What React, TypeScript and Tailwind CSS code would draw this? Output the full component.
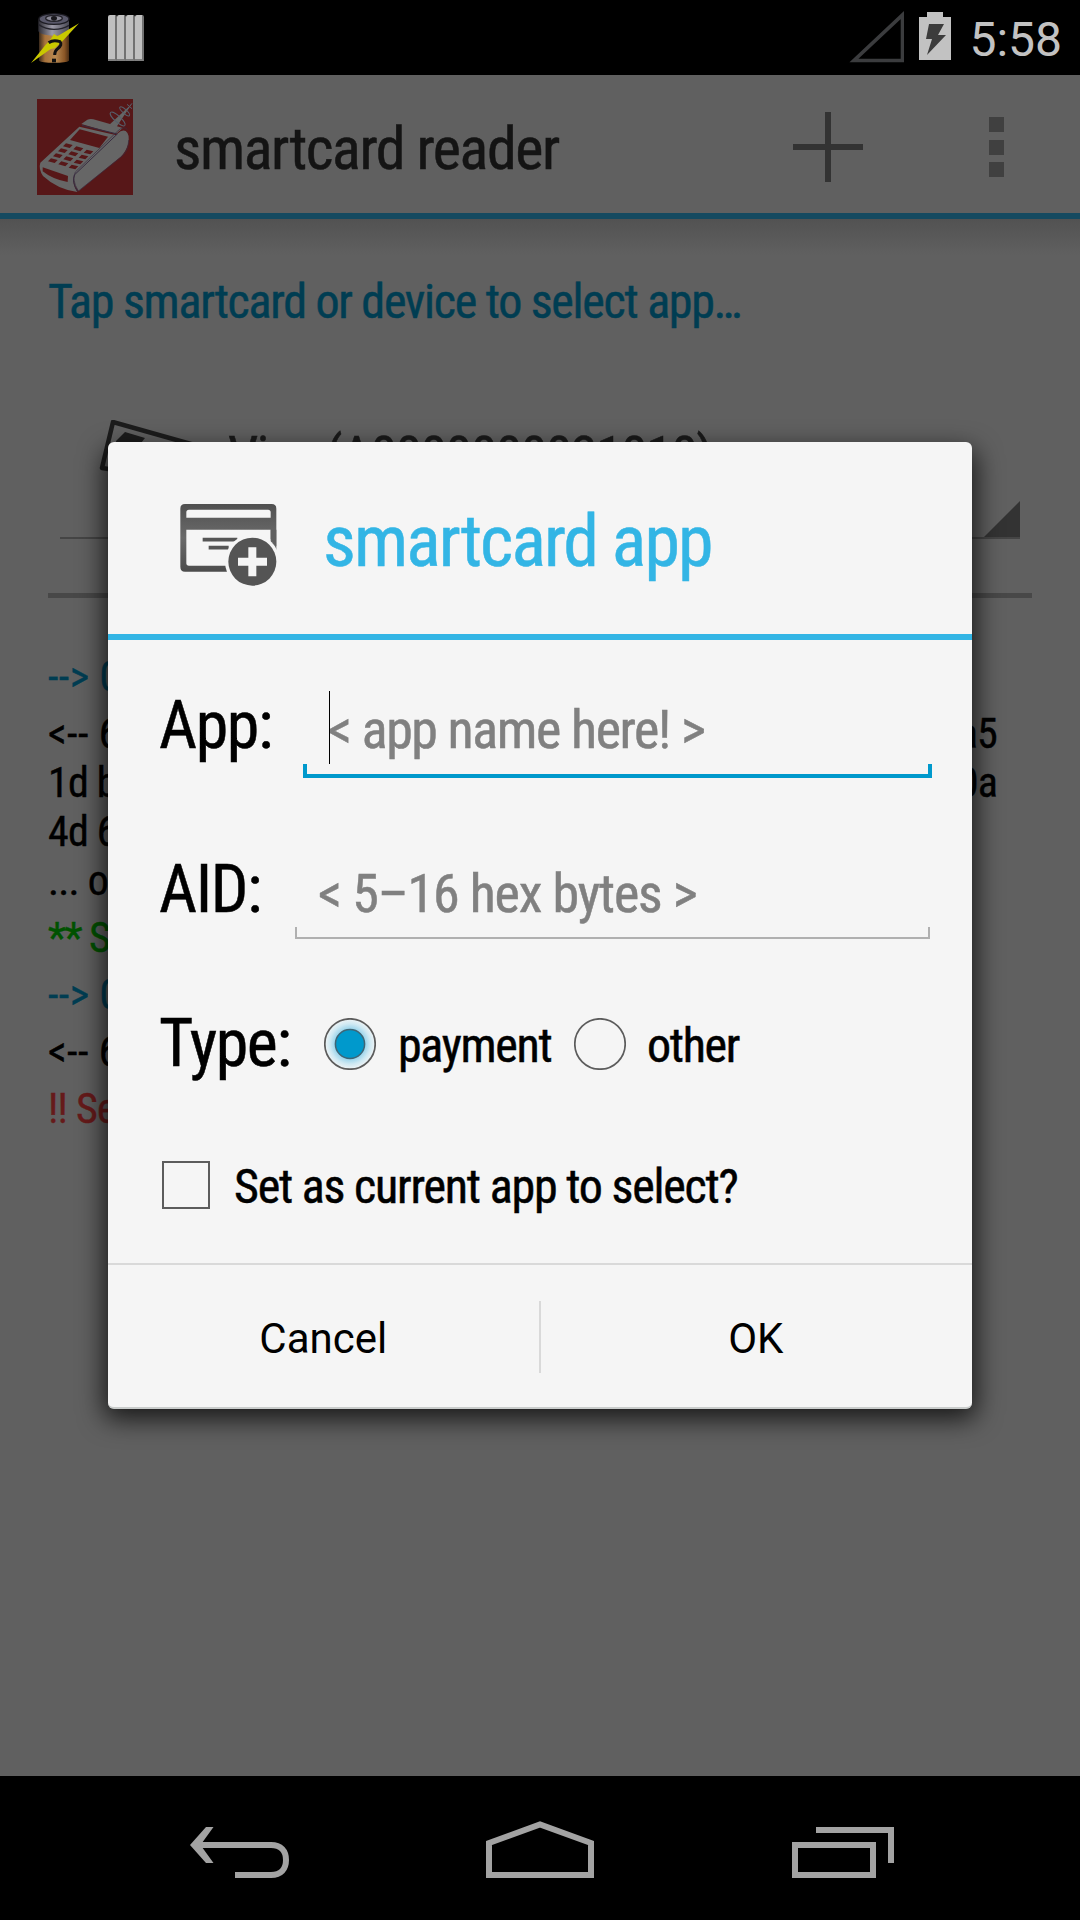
import type { ReactNode } from "react";

function UnknownBatteryIcon() {
  return (
    <svg className="h-[52px] w-12" viewBox="93 36 144 156">
      <defs>
        <linearGradient id="can" x1="0" x2="1">
          <stop offset="0" stopColor="#3a2a1c" />
          <stop offset="0.2" stopColor="#a8733c" />
          <stop offset="0.55" stopColor="#b98a52" />
          <stop offset="0.85" stopColor="#8a5626" />
          <stop offset="1" stopColor="#4a2d14" />
        </linearGradient>
        <linearGradient id="lid" x1="0" x2="1">
          <stop offset="0" stopColor="#2d2c33" />
          <stop offset="0.45" stopColor="#9c9aa8" />
          <stop offset="1" stopColor="#4a4955" />
        </linearGradient>
      </defs>
      <path d="M117 92h90v90q-8 6-45 6t-45-6z" fill="url(#can)" />
      <path d="M115 56h92v38q-10 13-46 13t-46-13z" fill="url(#lid)" />
      <ellipse cx="162" cy="57" rx="45" ry="16" fill="#59586a" stroke="#1c1b22" strokeWidth="4" />
      <ellipse cx="162" cy="55" rx="25" ry="9" fill="#8a8996" stroke="#24232a" strokeWidth="4" />
      <ellipse cx="162" cy="55" rx="9" ry="7" fill="#19181d" />
      <path d="M116 74q20 14 46 14t45-12" fill="none" stroke="#24232b" strokeWidth="4" />
      <path d="M237 70l-52 56-20 18-14 4-58 41 44-55 13-13 12-19 10 7z" fill="#c9c800" />
      <path d="M146 128q14-10 34-3 8 10-7 21-9 7-9 19" fill="none" stroke="#111" strokeWidth="9" />
      <path d="M156 176h12v11h-12z" fill="#111" />
    </svg>
  );
}

function BarsIcon() {
  return (
    <div className="flex h-[46px] w-9">
      {[0, 1, 2, 3].map((bar) => (
        <div
          key={bar}
          className="h-full w-[9px] rounded-t-[2px] border-r-2 border-b-2 border-r-[#727272] border-b-[#808080] bg-[#c0c0c0]"
        />
      ))}
    </div>
  );
}

function TerminalLogo() {
  return (
    <svg className="h-24 w-24 shrink-0" viewBox="111 297 288 288">
      <rect x="111" y="297" width="288" height="288" fill="#571718" />
      <g fill="#666">
        <path d="M121 488L238 380l112 26L222 530q-6 22 10 46-60-8-103-48-14-22-8-40z" />
        <path d="M244 372l18-13q8-3 18-1l50 14 38 12-20 18z" />
        <path d="M328 374L395 312l-46 70z" />
        <path d="M222 540q-2-10 8-20L352 401q14-13 25-8 14 10 7 40-7 24-22 37L236 573q-14-16-14-33z" />
      </g>
      <path d="M246 376l106 26L224 524q-10 20 8 50" fill="none" stroke="#382c40" strokeWidth="3" />
      <path d="M382 388q-12-12-30 6L226 516q-12 22 9 57L362 472q24-18 24-52" fill="none" stroke="#382c40" strokeWidth="2" />
      <g fill="none" stroke="#56606c" strokeWidth="3">
        <ellipse cx="353" cy="357" rx="29" ry="9" transform="rotate(42 353 357)" />
        <ellipse cx="374" cy="334" rx="19" ry="6" transform="rotate(42 374 334)" />
        <path d="M381 313l15 13M396 310l-14 18" />
      </g>
      <g fill="#571718">
        <path d="M239 388l85 22-26 34-88-24z" />
        <path d="M128 502l76 26-1 18q-44-7-75-32z" />
        {[0, 1, 2, 3].map((row) => (
          <g key={row} transform={`translate(${row * -15} ${row * 15})`}>
            <path d="M198 430l20 5-9 9-20-5z" />
            <path d="M229 439l21 6-9 9-21-6z" />
            <path d="M260 449l20 5-9 9-20-5z" />
          </g>
        ))}
      </g>
    </svg>
  );
}

function StatusBar() {
  return (
    <div className="flex h-[75px] shrink-0 bg-black">
      <div className="flex gap-[29px] pt-3 pl-[31px]">
        <UnknownBatteryIcon />
        <div className="pt-[3px]">
          <BarsIcon />
        </div>
      </div>
      <div className="ml-auto flex pr-[18px]">
        <svg className="mt-[11px] mr-[15px] h-[52px] w-[55px]" viewBox="0 0 55 52">
          <path d="M5 49.5H53.5V4z" fill="none" stroke="#3b3c3e" strokeWidth="3.6" />
        </svg>
        <svg className="mt-3 mr-[18px] h-12 w-8" viewBox="0 0 32 48">
          <path d="M8 0h16v5h8v43H0V5h8z" fill="#c2c2c2" />
          <path d="M10 12h15l-6 11h8L8 43l5-16H7z" fill="#3c3c3c" />
        </svg>
        <div className="text-[48px] leading-[80px] text-[#c2c2c2]">5:58</div>
      </div>
    </div>
  );
}

function ActionBar() {
  return (
    <div className="flex h-36 shrink-0 border-b-6 border-[#154a60] bg-[#606060] pl-[37px]">
      <div className="pt-6">
        <TerminalLogo />
      </div>
      <div className="pt-[38px] pl-[41px] font-['Roboto_Condensed'] text-[60px] leading-[72px] tracking-[-1.4px] text-[#141414] [-webkit-text-stroke:0.5px]">
        smartcard reader
      </div>
      <svg className="mt-9 mr-[126px] ml-auto h-[72px] w-[70px]" viewBox="0 0 70 72">
        <path d="M35 1v70M0 36h70" stroke="#333" strokeWidth="6" />
      </svg>
      <div className="mt-[42px] mr-[76px] flex flex-col gap-[7.5px]">
        <div className="size-[15px] bg-[#404040]" />
        <div className="size-[15px] bg-[#404040]" />
        <div className="size-[15px] bg-[#404040]" />
      </div>
    </div>
  );
}

function Spinner() {
  return (
    <div className="mx-[60px] mt-[88px] flex h-[119px] border-b-2 border-[#454545]">
      <svg className="ml-[38px] h-[60px] w-[120px]" viewBox="98 420 120 60">
        <path d="M102 468L113 422L198 446L240 458V490z" fill="none" stroke="#1c1c1c" strokeWidth="4.5" strokeLinejoin="round" />
        <path d="M116 441l9-9 20 6-8 10h-20z" fill="#1c1c1c" />
      </svg>
      <div className="ml-[10px] pt-[6px] font-['Roboto_Condensed'] text-[54px] leading-[60px] tracking-[-1.6px] text-[#1a1a1a] [-webkit-text-stroke:0.5px]">
        Visa (A0000000031010)
      </div>
      <svg className="mt-auto ml-auto size-9" viewBox="0 0 36 36">
        <path d="M36 0v36H0z" fill="#333" />
      </svg>
    </div>
  );
}

function LogLine({ arrow, left, right }: { arrow?: string; left: string; right?: string }) {
  return (
    <div className="flex h-[49px] justify-between">
      <span className="whitespace-pre">
        {arrow && <span className="tracking-[0.4px]">{arrow} </span>}
        {left}
      </span>
      <span>{right}</span>
    </div>
  );
}

function Log() {
  return (
    <div className="mt-[54px] mr-[83px] ml-12 flex flex-col gap-2 font-['Roboto_Condensed'] text-[42px] leading-[49px] tracking-[-0.8px] text-black [-webkit-text-stroke:0.4px]">
      <div className="text-[#003d52]">
        <LogLine arrow="-->" left="00" />
      </div>
      <div>
        <LogLine arrow="<--" left="6f" right="a5" />
        <LogLine left="1d bf" right="0a" />
        <LogLine left="4d 61" />
        <LogLine left="... ok" />
      </div>
      <div className="tracking-[-1.6px] text-[#005200]">
        <LogLine left="** Se" />
      </div>
      <div className="text-[#003d52]">
        <LogLine arrow="-->" left="00" />
      </div>
      <div>
        <LogLine arrow="<--" left="6f" />
      </div>
      <div className="text-[#661a1a]">
        <LogLine left="!! Sel" />
      </div>
    </div>
  );
}

function DialogIcon() {
  return (
    <svg className="h-[84px] w-[98px]" viewBox="419 279 294 252">
      <defs>
        <linearGradient id="card" x1="0" y1="0" x2="0" y2="1">
          <stop offset="0" stopColor="#505050" />
          <stop offset="0.5" stopColor="#6a6a6a" />
          <stop offset="1" stopColor="#4c4c4c" />
        </linearGradient>
      </defs>
      <path
        fillRule="evenodd"
        fill="url(#card)"
        d="M434 282H694Q708 282 708 296V470Q708 485 694 485H434Q420 485 420 470V296Q420 282 434 282zM446 299Q438 299 438 307V323H691V307Q691 299 683 299zM438 359V460Q438 467 446 467H691V359z"
      />
      <path d="M487 389h104M505 413h60" stroke="#555" strokeWidth="11" />
      <circle cx="636" cy="455" r="82" fill="#f5f5f5" />
      <path d="M691 359h17v50l-17-22z" fill="#606060" />
      <circle cx="636" cy="455" r="72" fill="#545454" />
      <path d="M636 412v87M593 455h87" stroke="#f5f5f5" strokeWidth="24" />
    </svg>
  );
}

function Label({ children }: { children: ReactNode }) {
  return <div className="text-[66px] leading-[80px] tracking-[-1.4px]">{children}</div>;
}

function Radio({ checked }: { checked?: boolean }) {
  return (
    <svg className="size-[52px]" viewBox="0 0 52 52">
      <defs>
        <radialGradient id="glow">
          <stop offset="0.55" stopColor="#8fd0ea" />
          <stop offset="0.8" stopColor="#cfe9f3" />
          <stop offset="1" stopColor="#f0f4f5" />
        </radialGradient>
      </defs>
      <circle cx="26" cy="26" r="25.2" fill={checked ? "url(#glow)" : "none"} stroke="#5c5c5c" strokeWidth="1.7" />
      {checked && <circle cx="26" cy="26" r="14.6" fill="#0099cc" stroke="#3f6575" strokeWidth="1.5" />}
    </svg>
  );
}

function Dialog() {
  return (
    <div className="absolute top-[442px] left-[108px] flex h-[967px] w-[864px] flex-col overflow-hidden rounded-[6px] border-b-2 border-[#c9cccb] bg-[#f5f5f5] font-['Roboto_Condensed'] text-black [-webkit-text-stroke:0.5px]">
      <div className="flex h-[198px] shrink-0 border-b-6 border-[#33b5e5] pl-[72px]">
        <div className="pt-[61px]">
          <DialogIcon />
        </div>
        <div className="pt-[58px] pl-[45px] text-[72px] leading-[84px] tracking-[-1.9px] text-[#33b5e5]">
          smartcard app
        </div>
      </div>

      <div className="flex h-[623px] shrink-0 flex-col pl-[51px]">
        <div className="mt-[46px] flex h-[92px] justify-between pr-[40px]">
          <Label>App:</Label>
          <div className="relative mt-1 h-[88px] w-[629px]">
            <div className="pl-[25px] text-[54px] leading-[80px] tracking-[-1.4px] text-[#808080]">
              &lt; app name here! &gt;
            </div>
            <div className="absolute top-px left-[26px] h-[73px] w-px bg-black" />
            <div className="absolute inset-x-0 bottom-0 h-[14px] border-x-4 border-b-4 border-[#0099cc]" />
          </div>
        </div>

        <div className="mt-[72px] flex h-[89px] justify-between pr-[42px]">
          <Label>AID:</Label>
          <div className="relative mt-1 h-[85px] w-[635px]">
            <div className="pl-[23px] text-[54px] leading-[80px] tracking-[-1.15px] text-[#808080]">
              &lt; 5–16 hex bytes &gt;
            </div>
            <div className="absolute inset-x-0 bottom-0 h-3 border-x-2 border-b-2 border-[#b0b0b0]" />
          </div>
        </div>

        <div className="mt-[65px] flex h-[79px] text-[48px] leading-[60px] tracking-[-1.3px]">
          <div className="w-[165px]">
            <Label>Type:</Label>
          </div>
          <div className="flex w-[250px] gap-[22px]">
            <div className="pt-[14px]">
              <Radio checked />
            </div>
            <div className="pt-3">payment</div>
          </div>
          <div className="flex gap-[21px]">
            <div className="pt-[14px]">
              <Radio />
            </div>
            <div className="pt-3">other</div>
          </div>
        </div>

        <div className="mt-[74px] flex gap-6 pl-[3px]">
          <div className="mt-1 size-12 border-2 border-[#5c5c5c]" />
          <div className="text-[48px] leading-[60px] tracking-[-1.2px]">Set as current app to select?</div>
        </div>
      </div>

      <div className="flex flex-1 border-t-2 border-[#d9d9d9] pr-px pb-px font-[Roboto] text-[42px] leading-[48px] [-webkit-text-stroke:0]">
        <div className="flex-1 pt-[50px] text-center">Cancel</div>
        <div className="mt-9 h-[72px] w-0.5 bg-[#d9d9d9]" />
        <div className="flex-1 pt-[50px] text-center">OK</div>
      </div>
    </div>
  );
}

function NavBar() {
  return (
    <div className="flex h-36 shrink-0 bg-black pt-[43px] pl-[189px]">
      <svg className="h-[62px] w-[101px]" viewBox="189 1819 101 62" fill="none" stroke="#a3a3a3" strokeWidth="6">
        <path d="M235 1875H271C281 1875 286 1869 286 1860S281 1845 271 1845H195" />
        <path d="M206 1827h7.500l-13 18 13 18H206l-16-18z" fill="#a3a3a3" stroke="none" />
      </svg>
      <svg className="ml-[195px] h-[62px] w-[110px]" viewBox="485 1819 110 62" fill="none" stroke="#a3a3a3" strokeWidth="6">
        <path d="M489 1875V1843L540 1824.500L591 1843V1875z" />
      </svg>
      <svg className="ml-[196px] h-[62px] w-[104px]" viewBox="791 1819 104 62" fill="none" stroke="#a3a3a3" strokeWidth="6">
        <path d="M795 1845h78v30h-78zM816 1830h75v33" />
      </svg>
    </div>
  );
}

export default function App() {
  return (
    <div className="relative flex h-[1920px] w-[1080px] flex-col overflow-hidden bg-[#606060] font-[Roboto]">
      <StatusBar />
      <ActionBar />
      <div className="relative flex-1">
        <div className="absolute inset-x-0 top-0 h-9 bg-linear-to-b from-[#525252] to-[#606060]" />
        <div className="relative pt-[53px] pl-12 font-['Roboto_Condensed'] text-[48px] leading-[60px] tracking-[-1.27px] text-[#003d52] [-webkit-text-stroke:0.5px]">
          Tap smartcard or device to select app…
        </div>
        <Spinner />
        <div className="mx-12 mt-[54px] h-[5px] bg-[#484848]" />
        <Log />
      </div>
      <NavBar />
      <div className="absolute top-[448px] left-[108px] h-[961px] w-[864px] rounded-[6px] shadow-[0_6px_26px_4px_rgba(0,0,0,0.75)]" />
      <Dialog />
    </div>
  );
}
